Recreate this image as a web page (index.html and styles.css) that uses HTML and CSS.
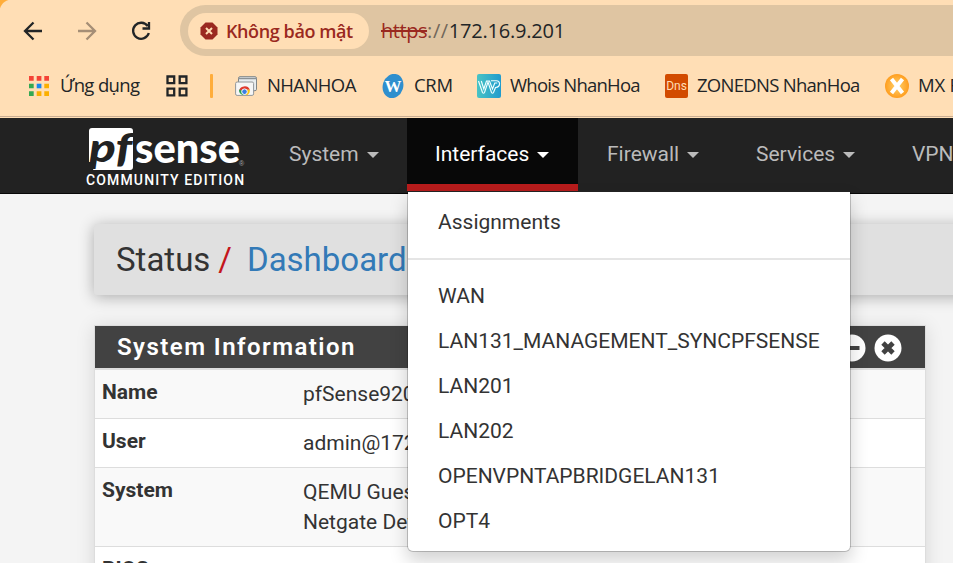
FILE: index.html
```html
<!DOCTYPE html>
<html lang="vi">
<head>
<meta charset="utf-8">
<title>pfSense - Status: Dashboard</title>
<link rel="stylesheet" href="styles.css">
</head>
<body>
<header class="browser">
  <div class="toolbar">
    <svg class="tool back" width="20" height="20" viewBox="0 0 20 20"><path d="M19 10H2M10.500 1.500L2 10l8.500 8.500"/></svg>
    <svg class="tool forward" width="20" height="20" viewBox="0 0 20 20"><path d="M1 10h17M9.500 1.500L18 10l-8.500 8.500"/></svg>
    <svg class="tool reload" width="20" height="20" viewBox="0 0 20 20"><path d="M16.700 5.200A8 8 0 1 0 17.800 12M18 1v6.500h-6.500"/></svg>
    <div class="address">
      <div class="security">
        <svg width="18" height="18" viewBox="0 0 18 18"><path fill="#9a2920" d="M5.500 .5h7l5 5v7l-5 5h-7l-5-5v-7z"/><path d="M6 6l6 6M12 6l-6 6" stroke="#ffdeb5" stroke-width="2"/></svg>
        <span class="warning">Không bảo mật</span>
      </div>
      <div class="url"><span class="scheme">https</span><span class="slashes">://</span><span class="host">172.16.9.201</span></div>
    </div>
  </div>
  <nav class="bookmarks">
    <svg class="apps" width="20" height="20" viewBox="0 0 20 20"><path fill="#f44336" d="M0 0h4.700v4.700H0zM7.700 0h4.700v4.700H7.700zM15.300 0H20v4.700h-4.700z"/><path fill="#34a853" d="M0 7.700h4.700v4.600H0zM0 15.300h4.700V20H0z"/><path fill="#1a87f0" d="M7.700 7.700h4.700v4.600H7.700z"/><path fill="#fbaf00" d="M15.300 7.700H20v4.600h-4.700zM7.700 15.300h4.700V20H7.700zM15.300 15.300H20V20h-4.700z"/></svg>
    <span class="mark mark-apps">Ứng dụng</span>
    <svg class="grid" width="22" height="22" viewBox="0 0 22 22"><path fill="none" stroke="#222527" stroke-width="2.300" d="M1.500 1.500h6.700v6.700H1.500zM13.700 1.500h6.700v6.700h-6.700zM1.500 13.700h6.700v6.700H1.500zM13.700 13.700h6.700v6.700h-6.700z"/></svg>
    <i class="separator"></i>
    <svg class="windows" width="22" height="20" viewBox="0 0 22 20"><rect x="3.500" y=".7" width="18" height="14" rx="1.500" fill="#e8edf0" stroke="#7f8588"/><path d="M4 2.500h17" stroke="#8c9295" stroke-width="1.500"/><rect x=".6" y="6" width="18" height="13.400" rx="1.500" fill="#f6f6f6" stroke="#92979a"/><path d="M4 15.500a5.700 5.700 0 0 1 10.900-1.700H9.500z" fill="#df3b30"/><path d="M4 13.500A5.600 5.600 0 0 0 7.500 19h2.300l-2-4z" fill="#25a455"/><path d="M10 13.800h5A6 6 0 0 1 12.500 19H9z" fill="#fbc40f"/><circle cx="9.500" cy="15.700" r="2.800" fill="#3b7ee3" stroke="#fff"/></svg>
    <span class="mark mark-nhanhoa">NHANHOA</span>
    <svg class="crm" width="22" height="24" viewBox="0 0 22 24"><ellipse cx="11" cy="12" rx="10.200" ry="12.300" transform="rotate(18 11 12)" fill="#2f8fce"/><text x="11" y="18" text-anchor="middle" class="crm-letter">W</text></svg>
    <span class="mark mark-crm">CRM</span>
    <svg class="whois" width="24" height="24" viewBox="0 0 24 24"><defs><linearGradient id="aqua"><stop stop-color="#49c3c4"/><stop offset="1" stop-color="#209bce"/></linearGradient></defs><rect width="24" height="24" rx="2" fill="url(#aqua)"/><path d="M1.500 7l4 11.500q1 1.500 2 0L11 8l3.500 10.500q1 1.500 2 0l2-5q4.300-.5 4-4.300-.4-2.500-3-2.500H14M4.300 7l2.500 8L9.500 7h3l3 8 2.300-6h2.500" fill="none" stroke="#f2ffff" stroke-width="1.150"/></svg>
    <span class="mark mark-whois">Whois NhanHoa</span>
    <span class="dns">Dns</span>
    <span class="mark mark-zone">ZONEDNS NhanHoa</span>
    <svg class="mx" width="24" height="24" viewBox="0 0 24 24"><defs><radialGradient id="orange"><stop stop-color="#ffd36e"/><stop offset="1" stop-color="#ff9e1f"/></radialGradient></defs><circle cx="12" cy="12" r="12" fill="url(#orange)"/><path d="M6.500 5l11 14M17.500 5l-11 14" stroke="#fff" stroke-width="4"/></svg>
    <span class="mark mark-mx">MX Record</span>
  </nav>
</header>

<nav class="navbar">
  <div class="brand">
    <svg width="160" height="48" viewBox="0 0 160 48">
      <path fill="#fff" d="M3 4Q3 1 6 1H44Q47 1 47 4V40Q47 43 44 43H7L10 35H3z"/>
      <text class="logo-pf" x="3" y="35" textLength="43" lengthAdjust="spacingAndGlyphs">pf</text>
      <text class="logo-sense" x="49" y="36" textLength="105" lengthAdjust="spacingAndGlyphs">sense</text>
      <text class="registered" x="153" y="39">®</text>
    </svg>
    <div class="edition">COMMUNITY EDITION</div>
  </div>
  <a class="tab system">System<i></i></a>
  <div class="tab active">
    <a>Interfaces<i></i></a>
    <ul class="dropdown">
      <li>Assignments</li>
      <li class="divider"></li>
      <li>WAN</li>
      <li>LAN131_MANAGEMENT_SYNCPFSENSE</li>
      <li>LAN201</li>
      <li>LAN202</li>
      <li>OPENVPNTAPBRIDGELAN131</li>
      <li>OPT4</li>
    </ul>
  </div>
  <a class="tab firewall">Firewall<i></i></a>
  <a class="tab services">Services<i></i></a>
  <a class="tab vpn">VPN<i></i></a>
</nav>

<main>
  <div class="breadcrumb"><span>Status</span><b>/</b><a>Dashboard</a></div>
  <section class="panel">
    <h2><span>System Information</span>
      <svg class="circle" width="28" height="28" viewBox="0 0 28 28"><circle cx="14" cy="14" r="13.500" fill="#fff"/><path d="M6.500 14h15" stroke="#424242" stroke-width="4"/></svg>
      <svg class="circle" width="28" height="28" viewBox="0 0 28 28"><circle cx="14" cy="14" r="13.500" fill="#fff"/><path d="M9 9l10 10M19 9l-10 10" stroke="#424242" stroke-width="4.800"/></svg>
    </h2>
    <dl>
      <div class="row"><dt>Name</dt><dd>pfSense920</dd></div>
      <div class="row"><dt>User</dt><dd>admin@172</dd></div>
      <div class="row"><dt>System</dt><dd>QEMU Gues<br>Netgate Dev</dd></div>
      <div class="row"><dt>BIOS</dt><dd>Vendor</dd></div>
    </dl>
  </section>
</main>
</body>
</html>
```
FILE: styles.css
```css
* { box-sizing: border-box; }
html, body { height: 100%; }
body { margin: 0; overflow: hidden; background: #f4f4f4; color: #333; font: 21px/30px Roboto, sans-serif; }
svg { display: block; flex: none; }
.browser { height: 118px; background: radial-gradient(circle at 12px 12px, #ffdeb5 12px, #ffad3b 13px) 0 0 / 12px 12px no-repeat #ffdeb5; border-bottom: 1px solid #ffdeb5; box-shadow: inset 0 -1px #c9ad92; font-family: "Open Sans", sans-serif; color: #222527; overflow: hidden; white-space: nowrap; }
.toolbar { display: flex; align-items: center; height: 56px; padding: 5px 0 0 23px; }
.tool { fill: none; stroke: #222527; stroke-width: 2.3; margin-right: 34px; }
.forward { stroke: #a58e76; }
.reload { margin-right: 29px; }
.address { flex: 1; height: 51px; display: flex; align-items: center; border-radius: 26px 0 0 26px; background: #dfc5a2; padding-left: 8px; }
.security { width: 181px; height: 36px; border-radius: 18px; background: #ffdeb5; display: flex; align-items: center; padding-left: 12px; }
.warning { color: #9a2920; font-size: 18px; font-weight: 600; margin-left: 8px; letter-spacing: -.4px; }
.url { margin-left: 12px; font-size: 20px; letter-spacing: -.45px; }
.scheme { color: #9a2920; text-decoration: line-through; text-decoration-thickness: 1.5px; }
.slashes { color: #71675a; letter-spacing: .6px; }
.host { letter-spacing: -.2px; }
.bookmarks { display: flex; align-items: center; height: 60px; padding-left: 29px; }
.mark { font-size: 18.5px; flex: none; letter-spacing: -.77px; position: relative; top: -1px; }
.mark-apps { width: 80px; margin: 0 25px 0 11px; letter-spacing: -.65px; }
.grid { margin-left: 1px; }
.separator { width: 3px; height: 24px; border-radius: 1px; background: #ffad3b; margin: 0 25px 0 22px; flex: none; }
.windows { margin-left: -3px; }
.mark-nhanhoa { width: 90px; margin: 0 25px 0 10px; letter-spacing: -.6px; }
.crm-letter { font: bold 17px "Liberation Serif", serif; fill: #fff; }
.mark-crm { width: 38px; margin: 0 25px 0 10px; letter-spacing: -.3px; }
.mark-whois { width: 130px; margin: 0 25px 0 9px; }
.dns { width: 23px; height: 24px; background: #d24b00; border-radius: 2px; color: #ffdeb5; font: 12px/24px Roboto, sans-serif; text-align: center; flex: none; }
.mark-zone { width: 163px; margin: 0 25px 0 9px; letter-spacing: -.72px; }
.mark-mx { margin-left: 9px; letter-spacing: -.2px; }

.navbar { position: relative; z-index: 2; height: 76px; background: #222; border-bottom: 1px solid #080808; display: flex; overflow: visible; }
.brand { width: 164px; flex: none; margin-left: 86px; padding-top: 9px; }
.logo-pf { font: italic 900 40px Lato, sans-serif; fill: #222; }
.logo-sense { font: 900 42px Lato, sans-serif; fill: #fff; }
.registered { font: 7px "Liberation Sans", sans-serif; fill: #aaa; }
.edition { font-size: 14px; font-weight: 500; line-height: 16px; color: #fff; letter-spacing: 1.15px; margin-top: -3px; white-space: nowrap; }
.tab { color: #bbb; white-space: nowrap; height: 73px; line-height: 72px; flex: none; }
.tab i { display: inline-block; border: 6px solid transparent; border-top-color: currentColor; border-bottom: 0; margin-left: 8px; vertical-align: 3px; }
.system { width: 118px; margin-left: 39px; }
.active { position: relative; width: 171px; padding-left: 28px; color: #fff; background: #080808; border-bottom: 7px solid #b71c1c; }
.firewall { width: 149px; margin-left: 29px; }
.services { width: 156px; }
.dropdown { position: absolute; left: 0; top: 73px; width: 444px; height: 361px; margin: 0; padding: 8px 0; list-style: none; background: #fff; color: #333; border: 1px solid rgba(0,0,0,.2); border-top-color: #222; border-radius: 0 0 6px 6px; background-clip: padding-box; box-shadow: 0 9px 18px rgba(0,0,0,.175); line-height: 45px; }
.dropdown li { height: 45px; padding-left: 30px; }
.dropdown .divider { height: 2px; margin: 13px 0 14px; background: #e5e5e5; padding: 0; }
main { padding: 30px 27px 0 94px; }
.breadcrumb { height: 71px; margin-right: -60px; padding: 0 22px; display: flex; align-items: center; background: #e0e0e0; border-radius: 3px; box-shadow: 0 2px 15px rgba(0,0,0,.3); font-size: 33px; line-height: 71px; }
.breadcrumb b { color: #c4161c; font-weight: 400; margin: 0 15px 0 8px; }
.breadcrumb a { color: #337ab7; }
.panel { margin-top: 30px; width: 832px; border: 1px solid #ddd; background: #fff; box-shadow: 0 2px 18px rgba(0,0,0,.12); }
h2 { margin: 0; height: 42px; background: #424242; display: flex; align-items: center; gap: 8px; padding: 0 23px 0 22px; color: #fff; font-size: 24px; font-weight: 600; letter-spacing: 1.45px; }
h2 .circle { position: relative; top: 1px; }
h2 span { flex: 1; }
dl { margin: 0; border-top: 1px solid #ddd; }
.row { display: flex; border-top: 1px solid #ddd; padding: 9px 7px; }
.row:nth-child(odd) { background: #f9f9f9; }
dt { width: 201px; font-weight: 700; margin-top: -2px; }
dd { margin: 0; }
```
